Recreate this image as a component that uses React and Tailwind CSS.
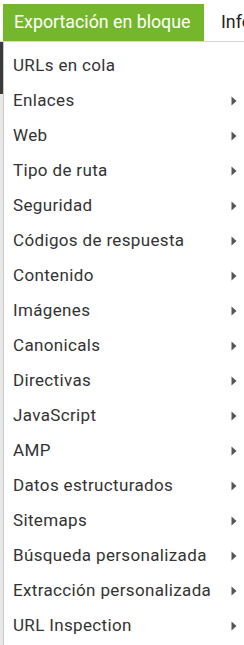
import React from 'react'

const items = [
    { label: 'URLs en cola', sub: false },
    { label: 'Enlaces', sub: true },
    { label: 'Web', sub: true },
    { label: 'Tipo de ruta', sub: true },
    { label: 'Seguridad', sub: true },
    { label: 'Códigos de respuesta', sub: true },
    { label: 'Contenido', sub: true },
    { label: 'Imágenes', sub: true },
    { label: 'Canonicals', sub: true },
    { label: 'Directivas', sub: true },
    { label: 'JavaScript', sub: true },
    { label: 'AMP', sub: true },
    { label: 'Datos estructurados', sub: true },
    { label: 'Sitemaps', sub: true },
    { label: 'Búsqueda personalizada', sub: true },
    { label: 'Extracción personalizada', sub: true },
    { label: 'URL Inspection', sub: true },
]

function Arrow() {
    return (
        <svg width="6" height="10" viewBox="0 0 6 10" className="shrink-0">
            <path d="M0.5 0.5 L5.5 5 L0.5 9.5 Z" fill="#555" />
        </svg>
    )
}

export default function App() {
    return (
        <div className="w-[244px] h-[645px] overflow-hidden bg-white flex flex-col" style={{ fontFamily: 'Roboto, "Noto Sans", sans-serif' }}>
            {/* Top menubar */}
            <div className="h-[42px] pt-[4px] flex border-b border-[#d6d6d6] shrink-0 overflow-hidden">
                <div className="w-[3px] shrink-0 bg-white" />
                <div className="w-[201px] shrink-0 bg-[#75b72c] text-white text-[17.8px] flex items-center pl-[11px] whitespace-nowrap">
                    Exportación en bloque
                </div>
                <div className="pl-[17px] shrink-0 text-[17.8px] text-[#222] flex items-center">Info</div>
            </div>

            {/* Dropdown */}
            <div className="flex flex-1">
                <div className="w-[3px] flex flex-col">
                    <div className="h-[52px] bg-[#3a3a3a]" />
                    <div className="flex-1 bg-[#e8e8e8]" />
                </div>
                <div className="flex-1 border-l border-[#c8c8c8] bg-white pt-[6px]">
                    {items.map((it) => (
                        <div key={it.label} className="h-[35px] flex items-center justify-between pl-[9px] pr-[7px] text-[17px] tracking-[0.35px] text-[#333] whitespace-nowrap">
                            <span>{it.label}</span>
                            {it.sub && <Arrow />}
                        </div>
                    ))}
                </div>
            </div>
        </div>
    )
}
